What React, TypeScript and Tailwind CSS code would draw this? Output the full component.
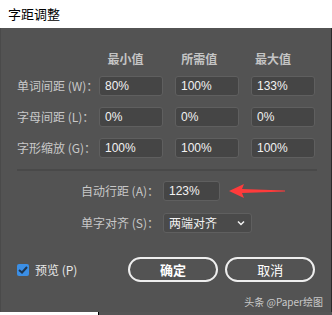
import React from 'react'

const cjk = { fontFamily: '"Noto Sans CJK SC", "Liberation Sans", sans-serif' }
const num = { fontFamily: '"Liberation Sans", "Noto Sans CJK SC", sans-serif' }

const rows = [
  { label: '单词间距 (W)：', values: ['80%', '100%', '133%'] },
  { label: '字母间距 (L)：', values: ['0%', '0%', '0%'] },
  { label: '字形缩放 (G)：', values: ['100%', '100%', '100%'] },
]

const Field = ({ value, width }: { value: string; width: string }) => (
  <div
    className={`flex h-5 ${width} items-center rounded-[3px] border border-[#5f5f5f] bg-[#454545] pl-[5px] text-[12px] text-[#f2f2f2]`}
    style={num}
  >
    {value}
  </div>
)

const App = () => {
  return (
    <div className="flex h-[315px] w-[332px] flex-col bg-white" style={cjk}>
      <div className="flex h-7 items-center pl-2 text-[13px] text-black">字距调整</div>
      <div className="flex h-[284px] flex-col border-l border-r border-l-[#4a4a4a] border-r-[#2b2b2b] bg-[#535353] pl-4 pr-4">
        <div className="mt-[22px] flex h-[18px] items-center text-[12px] font-bold text-[#c4c4c4]">
          <div className="w-[88px]" />
          <div className="w-[76px] pl-[4px]">最小值</div>
          <div className="w-[75px] pl-[3px]">所需值</div>
          <div className="w-[64px] pl-[3px]">最大值</div>
        </div>
        <div className="mt-2 flex flex-col gap-[11px]">
          {rows.map((row) => (
            <div key={row.label} className="flex h-5 items-center">
              <div className="w-[84px] whitespace-nowrap text-[12px] text-[#c8c8c8]">{row.label}</div>
              <div className="flex gap-3">
                {row.values.map((v, i) => (
                  <Field key={i} value={v} width="w-16" />
                ))}
              </div>
            </div>
          ))}
        </div>
        <div className="mt-[11px] h-[2px] w-[300px] bg-[#494949]" />
        <div className="mt-[10px] flex h-5 items-center">
          <div className="w-[146px] whitespace-nowrap pr-[4px] text-right text-[12px] text-[#c8c8c8]">自动行距 (A)：</div>
          <Field value="123%" width="w-[57px]" />
          <svg className="ml-[9px]" width="58" height="16" viewBox="0 0 58 16">
            <path d="M0 8 L15 1 L13 6 L56 7.4 L56 8.6 L13 10 L15 15 Z" fill="#ff3b3b" />
          </svg>
        </div>
        <div className="mt-[12px] flex h-5 items-center">
          <div className="w-[146px] whitespace-nowrap pr-[4px] text-right text-[12px] text-[#c8c8c8]">单字对齐 (S)：</div>
          <div className="flex h-5 w-[89px] items-center justify-between rounded-[3px] border border-[#5f5f5f] bg-[#4a4a4a] pl-[5px] pr-[6px] text-[12px] text-[#f2f2f2]">
            <span>两端对齐</span>
            <svg width="8" height="6" viewBox="0 0 8 6">
              <path d="M1 1.5 L4 4.5 L7 1.5" stroke="#f2f2f2" strokeWidth="1.5" fill="none" />
            </svg>
          </div>
        </div>
        <div className="mt-[24px] flex h-[25px] items-center">
          <div className="flex w-[111px] items-center gap-[6px]">
            <div className="flex h-3 w-3 items-center justify-center rounded-[2px] bg-[#3b8fe6]">
              <svg width="10" height="8" viewBox="0 0 10 8">
                <path d="M1 4 L4 6.5 L9 1" stroke="#1d3550" strokeWidth="2" fill="none" />
              </svg>
            </div>
            <span className="text-[12px] text-[#e8e8e8]">预览 (P)</span>
          </div>
          <button className="h-[25px] w-[91px] rounded-full border-2 border-[#eeeeee] text-[13px] font-bold text-white">
            确定
          </button>
          <button className="ml-[7px] h-[25px] w-[90px] rounded-full border-2 border-[#eeeeee] text-[13px] text-white">
            取消
          </button>
        </div>
        <div className="mt-[12px] flex justify-end pr-[-8px]">
          <span className="-mr-2 text-[10px] text-[#c9c9c9]">头条 @Paper绘图</span>
        </div>
      </div>
      <div className="flex h-[3px]">
        <div className="w-[98px] bg-white" />
        <div className="w-px bg-black" />
        <div className="flex-1 bg-[#555555]" />
      </div>
    </div>
  )
}

export default App
